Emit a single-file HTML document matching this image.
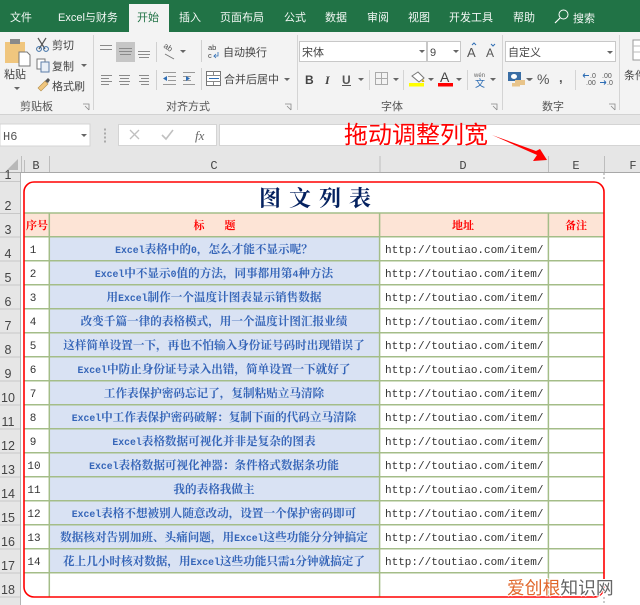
<!DOCTYPE html>
<html><head><meta charset="utf-8"><style>
html,body{margin:0;padding:0;background:#fff;width:640px;height:605px;overflow:hidden}
svg{display:block}
text{font-family:"Liberation Sans","Noto Sans CJK SC",sans-serif}
.tab{font-size:11px;fill:#f2f7f4}
.rb{font-size:11px;fill:#444}
.gl{font-size:11px;fill:#555}
.rn{font-size:12.5px;fill:#444;text-anchor:middle}
.cn{font-size:12px;fill:#444;text-anchor:middle;font-family:"Liberation Mono",monospace}
.t{font-family:"Noto Serif CJK SC","Liberation Serif",serif;font-size:11.6px;font-weight:700;fill:#3565b8;text-anchor:middle}
.t tspan{font-family:"Liberation Mono",monospace;font-size:9.8px}
.u{font-family:"Liberation Mono",monospace;font-size:11px;fill:#333}
.n{font-size:11px;fill:#333;font-family:"Liberation Mono",monospace;text-anchor:middle}
.h{font-family:"Noto Serif CJK SC",serif;font-size:11px;font-weight:700;fill:#f00;text-anchor:middle}
</style></head><body>
<svg xmlns="http://www.w3.org/2000/svg" width="640" height="605" viewBox="0 0 640 605">
<!-- tab bar -->
<rect width="640" height="32" fill="#217346"/>
<rect x="0" y="32" width="640" height="82" fill="#f3f3f3"/>
<rect x="129" y="4" width="40" height="28" fill="#f3f3f3"/>
<text class="tab" x="10" y="21">文件</text>
<text class="tab" x="58" y="21">Excel与财务</text>
<text class="tab" x="137" y="21" style="fill:#217346">开始</text>
<text class="tab" x="179" y="21">插入</text>
<text class="tab" x="220" y="21">页面布局</text>
<text class="tab" x="284" y="21">公式</text>
<text class="tab" x="325" y="21">数据</text>
<text class="tab" x="367" y="21">审阅</text>
<text class="tab" x="408" y="21">视图</text>
<text class="tab" x="449" y="21">开发工具</text>
<text class="tab" x="513" y="21">帮助</text>
<text class="tab" x="573" y="22">搜索</text>
<circle cx="563.500" cy="14.500" r="4.500" fill="none" stroke="#fff" stroke-width="1"/>
<path d="M560 18L555 23" stroke="#fff" stroke-width="1.200"/>
<!-- group separators -->
<path d="M93.500 35V110M297.500 35V110M502.500 35V110M619.500 35V110" stroke="#d4d4d4"/>
<!-- clipboard -->
<rect x="5" y="42" width="20" height="21" fill="#f0c67e"/>
<rect x="10" y="39" width="10" height="5" fill="#8a8a8a"/>
<path d="M19 52H27L30 55V66H19Z" fill="#fff" stroke="#777"/>
<text class="rb" x="4" y="78">粘贴</text>
<path d="M14 87l3 3 3-3z" fill="#666"/>
<path d="M38 38L45 49M46 38L39 49" stroke="#555" stroke-width="1.200"/>
<circle cx="39" cy="49" r="2.400" fill="none" stroke="#3a6ea5"/>
<circle cx="46" cy="49" r="2.400" fill="none" stroke="#3a6ea5"/>
<text class="rb" x="52" y="49">剪切</text>
<rect x="37" y="59" width="8" height="10" fill="#fff" stroke="#777"/>
<rect x="41" y="62" width="8" height="10" fill="#e8eef6" stroke="#5d7ea8"/>
<text class="rb" x="52" y="70">复制</text>
<path d="M81 64l3 3 3-3z" fill="#666"/>
<path d="M38 88l7-7 3 3-7 7z" fill="#f0c67e" stroke="#b58f4a" stroke-width=".6"/>
<path d="M45 81l3-3 2 2-2 3z" fill="#555"/>
<text class="rb" x="52" y="90">格式刷</text>
<text class="gl" x="20" y="110">剪贴板</text>
<path d="M83 104h6v6M85 106l4 4" stroke="#888" fill="none" stroke-width=".8"/>
<!-- alignment -->
<rect x="116" y="42" width="19" height="20" fill="#c6c6c6"/>
<g stroke="#8a8a8a" stroke-width="1" fill="none">
<path d="M100 45.500h12M100 49.500h12"/>
<path d="M119 48.500h13M119 51.500h13M120 54.500h11"/>
<path d="M138 51.500h12M138 54.500h12M139 57.500h10"/>
<path d="M101 75.500h11M101 78.500h8M101 81.500h11M101 84.500h8"/>
<path d="M119 75.500h11M120 78.500h9M119 81.500h11M120 84.500h9"/>
<path d="M139 75.500h10M141 78.500h8M139 81.500h10M141 84.500h8"/>
</g>
<path d="M156.500 42V62M156.500 70V90M201.500 40V62M201.500 68V90" stroke="#d0d0d0"/>
<text transform="translate(163 47) rotate(35)" style="font-size:8px;fill:#555">ab</text>
<path d="M165 54l9 5" fill="none" stroke="#777"/>
<path d="M180 50l3 3 3-3z" fill="#666"/>
<g stroke="#999" fill="none"><path d="M163 72.500h13M168 76.500h8M168 80.500h8M163 84.500h13"/><path d="M183 72.500h12M183 76.500h8M183 80.500h8M183 84.500h12"/></g>
<path d="M167 76l-4 2.500 4 2.500z" fill="#2e6db4"/><path d="M186 76l4 2.500-4 2.500z" fill="#2e6db4"/>
<text x="208" y="50" style="font-size:7.500px;fill:#444">ab</text>
<text x="208" y="58" style="font-size:7.500px;fill:#444">c</text>
<path d="M218 52v4h-4l2-2m-2 2l2 2" stroke="#2e6db4" fill="none" stroke-width=".8"/>
<text class="rb" x="223" y="56">自动换行</text>
<rect x="206.500" y="71.500" width="14" height="14" fill="#fff" stroke="#777"/>
<path d="M207 75.500h14M207 81.500h14M213.500 71v4M213.500 81v4" stroke="#888"/>
<path d="M209 78.500h10" stroke="#2e6db4"/>
<text class="rb" x="224" y="83">合并后居中</text>
<path d="M284 78l3 3 3-3z" fill="#666"/>
<text class="gl" x="166" y="110">对齐方式</text>
<path d="M285 104h6v6M287 106l4 4" stroke="#888" fill="none" stroke-width=".8"/>
<!-- font -->
<rect x="299.500" y="41.500" width="127" height="20" fill="#fff" stroke="#c8c8c8"/>
<rect x="427.500" y="41.500" width="33" height="20" fill="#fff" stroke="#c8c8c8"/>
<text class="rb" x="302" y="56">宋体</text>
<path d="M419 50l3 3 3-3z" fill="#666"/>
<text class="rb" x="430" y="56">9</text>
<path d="M453 50l3 3 3-3z" fill="#666"/>
<text x="467" y="57" style="font-size:13px;fill:#555">A</text>
<path d="M472 45l2-2 2 2" stroke="#2e6db4" fill="none"/>
<text x="486" y="57" style="font-size:12px;fill:#555">A</text>
<path d="M491 44l2 2 2-2" stroke="#2e6db4" fill="none"/>
<text x="305" y="84" style="font-family:'Liberation Sans';font-size:12px;font-weight:700;fill:#444">B</text>
<text x="325" y="84" style="font-family:'Liberation Serif';font-size:12px;font-weight:700;font-style:italic;fill:#444">I</text>
<text x="342" y="84" style="font-family:'Liberation Sans';font-size:12px;font-weight:700;fill:#555">U</text>
<path d="M342 85.500h9" stroke="#555"/>
<path d="M358 78l3 3 3-3zM393 78l3 3 3-3zM428 78l3 3 3-3zM456 78l3 3 3-3zM490 78l3 3 3-3zM526 78l3 3 3-3z" fill="#666"/>
<path d="M369.500 70V90M403.500 70V90M467.500 70V90" stroke="#d4d4d4"/>
<rect x="375.500" y="72.500" width="12" height="12" fill="none" stroke="#aaa"/>
<path d="M381.500 73v12M376 78.500h12" stroke="#aaa"/>
<path d="M412 76l6-4 6 6-5 4z" fill="#fff" stroke="#777"/>
<path d="M423 79l1.500 3h-3z" fill="#e0b000"/>
<rect x="409" y="83" width="15" height="3.500" fill="#ff0"/>
<text x="440" y="82" style="font-family:'Liberation Sans';font-size:14px;fill:#444">A</text>
<rect x="438" y="83" width="15" height="3.500" fill="#f00"/>
<text x="474" y="77" style="font-size:6px;fill:#666">wén</text>
<text x="475" y="87" style="font-size:10px;fill:#2e6db4">文</text>
<text class="gl" x="381" y="110">字体</text>
<path d="M491 104h6v6M493 106l4 4" stroke="#888" fill="none" stroke-width=".8"/>
<!-- number -->
<rect x="505.500" y="41.500" width="110" height="20" fill="#fff" stroke="#c8c8c8"/>
<text class="rb" x="508" y="56">自定义</text>
<path d="M607 51l3 3 3-3z" fill="#666"/>
<rect x="508" y="72" width="13" height="9" fill="#3a6ea5"/>
<ellipse cx="514" cy="76.500" rx="3" ry="2.500" fill="#fff"/>
<rect x="515" y="80" width="10" height="5" fill="#e8c48a"/><rect x="512" y="83" width="8" height="3.500" fill="#e8c48a"/>
<path d="M527 78l3 3 3-3z" fill="#666"/>
<text x="537" y="84" style="font-size:14px;fill:#555">%</text>
<text x="559" y="82" style="font-size:13px;font-weight:700;fill:#555">,</text>
<path d="M575.500 70V90" stroke="#d4d4d4"/>
<text x="590" y="78" style="font-size:7px;fill:#555">.0</text>
<text x="586" y="85" style="font-size:7px;fill:#555">.00</text>
<path d="M583 75.500h6M583 75.500l2-2M583 75.500l2 2" stroke="#2e6db4" fill="none"/>
<text x="602" y="78" style="font-size:7px;fill:#555">.00</text>
<text x="607" y="85" style="font-size:7px;fill:#555">.0</text>
<path d="M600 82.500h6M606 82.500l-2-2M606 82.500l-2 2" stroke="#2e6db4" fill="none"/>
<text class="gl" x="542" y="110">数字</text>
<path d="M609 104h6v6M611 106l4 4" stroke="#888" fill="none" stroke-width=".8"/>
<rect x="633" y="40" width="10" height="20" fill="#fff" stroke="#999"/>
<path d="M633 46h8M633 52h8" stroke="#bbb"/>
<text class="rb" x="624" y="79">条件</text>
<!-- formula bar area -->
<rect x="0" y="114" width="640" height="42" fill="#e6e6e6"/>
<rect x="0" y="114" width="640" height="1" fill="#d2d2d2"/>
<rect x="0" y="124" width="90" height="22" fill="#fff" stroke="#d4d4d4"/>
<text x="3" y="140" style="font-size:12px;fill:#555;font-family:'Liberation Mono',monospace">H6</text>
<path d="M81 134l3 3 3-3z" fill="#666"/>
<path d="M104 129.500h2M104 133.500h2M104 137.500h2M104 141.500h2" stroke="#aaa" stroke-width="2"/>
<rect x="118.500" y="124.500" width="98" height="21" fill="#fff" stroke="#d4d4d4"/>
<rect x="219.500" y="124.500" width="422" height="21" fill="#fff" stroke="#d4d4d4"/>
<path d="M130 130l9 9M139 130l-9 9" stroke="#c0c0c0" stroke-width="1.300"/>
<path d="M162 135l4 4 7-9" stroke="#c0c0c0" stroke-width="1.600" fill="none"/>
<text x="195" y="140" style="font-family:'Liberation Serif';font-style:italic;font-size:13px;fill:#666">fx</text>
<!-- col headers -->
<rect x="0" y="156" width="640" height="17" fill="#e6e6e6"/>
<rect x="0" y="172" width="640" height="1" fill="#a8a8a8"/>
<path d="M7 170L18 159V170Z" fill="#b8b8b8"/>
<path d="M21.500 156V172M24.500 160V172M49.500 156V172M380 156V172M548.500 156V172M604.500 156V172" stroke="#bdbdbd"/>
<text class="cn" x="36" y="169">B</text>
<text class="cn" x="214" y="169">C</text>
<text class="cn" x="463" y="169">D</text>
<text class="cn" x="576" y="169">E</text>
<text class="cn" x="633" y="169">F</text>
<!-- annotation -->
<text x="344" y="143" style="font-family:'Noto Sans CJK SC',sans-serif;font-size:24px;fill:#f00">拖动调整列宽</text>
<path d="M492 135L536 151L540 149L547 160L533 161L537 155Z" fill="#f00"/>
<!-- row headers -->
<rect x="0" y="173" width="21" height="432" fill="#e6e6e6"/>
<rect x="20" y="173" width="1" height="432" fill="#b4b4b4"/>
<path d="M0 181.500h20M0 213.500h20M0 237h20M0 261h20M0 285h20M0 309h20M0 333h20M0 357h20M0 381h20M0 405h20M0 429h20M0 453h20M0 477h20M0 501h20M0 525h20M0 549h20M0 573h20M0 597h20" stroke="#c8c8c8"/>
<g>
<text class="rn" x="8" y="179">1</text><text class="rn" x="8" y="210">2</text><text class="rn" x="8" y="234">3</text><text class="rn" x="8" y="258">4</text><text class="rn" x="8" y="282">5</text><text class="rn" x="8" y="306">6</text><text class="rn" x="8" y="330">7</text><text class="rn" x="8" y="354">8</text><text class="rn" x="8" y="378">9</text><text class="rn" x="8" y="402">10</text><text class="rn" x="8" y="426">11</text><text class="rn" x="8" y="450">12</text><text class="rn" x="8" y="474">13</text><text class="rn" x="8" y="498">14</text><text class="rn" x="8" y="522">15</text><text class="rn" x="8" y="546">16</text><text class="rn" x="8" y="570">17</text><text class="rn" x="8" y="594">18</text>
</g>
<!-- table fills -->
<rect x="24" y="213" width="580" height="24" fill="#fde4d6"/>
<rect x="49" y="237" width="331" height="336" fill="#d9e2f3"/>
<!-- grid -->
<g stroke="#a4bd88" stroke-width="1.500" fill="none">
<path d="M24 213H604M24 236.700H604M24 260.700H604M24 284.700H604M24 308.700H604M24 332.700H604M24 356.700H604M24 380.700H604M24 404.700H604M24 428.700H604M24 452.700H604M24 476.700H604M24 500.700H604M24 524.700H604M24 548.700H604M24 572.700H604"/>
<path d="M49.300 213V597M379.600 213V597M548.400 213V597"/>
</g>
<!-- title -->
<text x="259" y="206" style="font-family:'Noto Serif CJK SC',serif;font-size:22px;font-weight:700;fill:#04215f;letter-spacing:8px">图文列表</text>
<text class="h" x="37" y="229">序号</text>
<text class="h" x="199" y="229">标</text>
<text class="h" x="230" y="229">题</text>
<text class="h" x="463" y="229">地址</text>
<text class="h" x="576" y="229">备注</text>
<!-- numbers -->
<text class="n" x="33" y="253">1</text><text class="n" x="33" y="277">2</text><text class="n" x="33" y="301">3</text><text class="n" x="33" y="325">4</text><text class="n" x="33" y="349">5</text><text class="n" x="33" y="373">6</text><text class="n" x="33" y="397">7</text><text class="n" x="33" y="421">8</text><text class="n" x="33" y="445">9</text><text class="n" x="34" y="469">10</text><text class="n" x="34" y="493">11</text><text class="n" x="34" y="517">12</text><text class="n" x="34" y="541">13</text><text class="n" x="34" y="565">14</text>
<!-- titles -->
<text class="t" x="214" y="253"><tspan>Excel</tspan>表格中的<tspan>0</tspan>，怎么才能不显示呢？</text>
<text class="t" x="214" y="277"><tspan>Excel</tspan>中不显示<tspan>0</tspan>值的方法，同事都用第<tspan>4</tspan>种方法</text>
<text class="t" x="214" y="301">用<tspan>Excel</tspan>制作一个温度计图表显示销售数据</text>
<text class="t" x="214" y="325">改变千篇一律的表格模式，用一个温度计图汇报业绩</text>
<text class="t" x="214" y="349">这样简单设置一下，再也不怕输入身份证号码时出现错误了</text>
<text class="t" x="214" y="373"><tspan>Excel</tspan>中防止身份证号录入出错，简单设置一下就好了</text>
<text class="t" x="214" y="397">工作表保护密码忘记了，复制粘贴立马清除</text>
<text class="t" x="214" y="421"><tspan>Excel</tspan>中工作表保护密码破解：复制下面的代码立马清除</text>
<text class="t" x="214" y="445"><tspan>Excel</tspan>表格数据可视化并非是复杂的图表</text>
<text class="t" x="214" y="469"><tspan>Excel</tspan>表格数据可视化神器：条件格式数据条功能</text>
<text class="t" x="214" y="493">我的表格我做主</text>
<text class="t" x="214" y="517"><tspan>Excel</tspan>表格不想被别人随意改动，设置一个保护密码即可</text>
<text class="t" x="214" y="541">数据核对告别加班、头痛问题，用<tspan>Excel</tspan>这些功能分分钟搞定</text>
<text class="t" x="214" y="565">花上几小时核对数据，用<tspan>Excel</tspan>这些功能只需<tspan>1</tspan>分钟就搞定了</text>
<!-- urls -->
<text class="u" x="385" y="253">http://toutiao.com/item/</text>
<text class="u" x="385" y="277">http://toutiao.com/item/</text>
<text class="u" x="385" y="301">http://toutiao.com/item/</text>
<text class="u" x="385" y="325">http://toutiao.com/item/</text>
<text class="u" x="385" y="349">http://toutiao.com/item/</text>
<text class="u" x="385" y="373">http://toutiao.com/item/</text>
<text class="u" x="385" y="397">http://toutiao.com/item/</text>
<text class="u" x="385" y="421">http://toutiao.com/item/</text>
<text class="u" x="385" y="445">http://toutiao.com/item/</text>
<text class="u" x="385" y="469">http://toutiao.com/item/</text>
<text class="u" x="385" y="493">http://toutiao.com/item/</text>
<text class="u" x="385" y="517">http://toutiao.com/item/</text>
<text class="u" x="385" y="541">http://toutiao.com/item/</text>
<text class="u" x="385" y="565">http://toutiao.com/item/</text>
<!-- dashed page break -->
<path d="M604 173V181M604 597V605" stroke="#b0b0b0" stroke-width="1.300" stroke-dasharray="2 2"/>
<!-- red rounded frame -->
<rect x="24" y="182" width="580" height="415" rx="10" ry="10" fill="none" stroke="#f00" stroke-width="1.600"/>
<!-- watermark -->
<text x="507" y="594" style="font-family:'Noto Sans CJK SC',sans-serif;font-size:17.800px;fill:#e0662a;stroke:#fff;stroke-width:2;paint-order:stroke">爱创根<tspan style="fill:#666">知识网</tspan></text>
</svg>
</body></html>
